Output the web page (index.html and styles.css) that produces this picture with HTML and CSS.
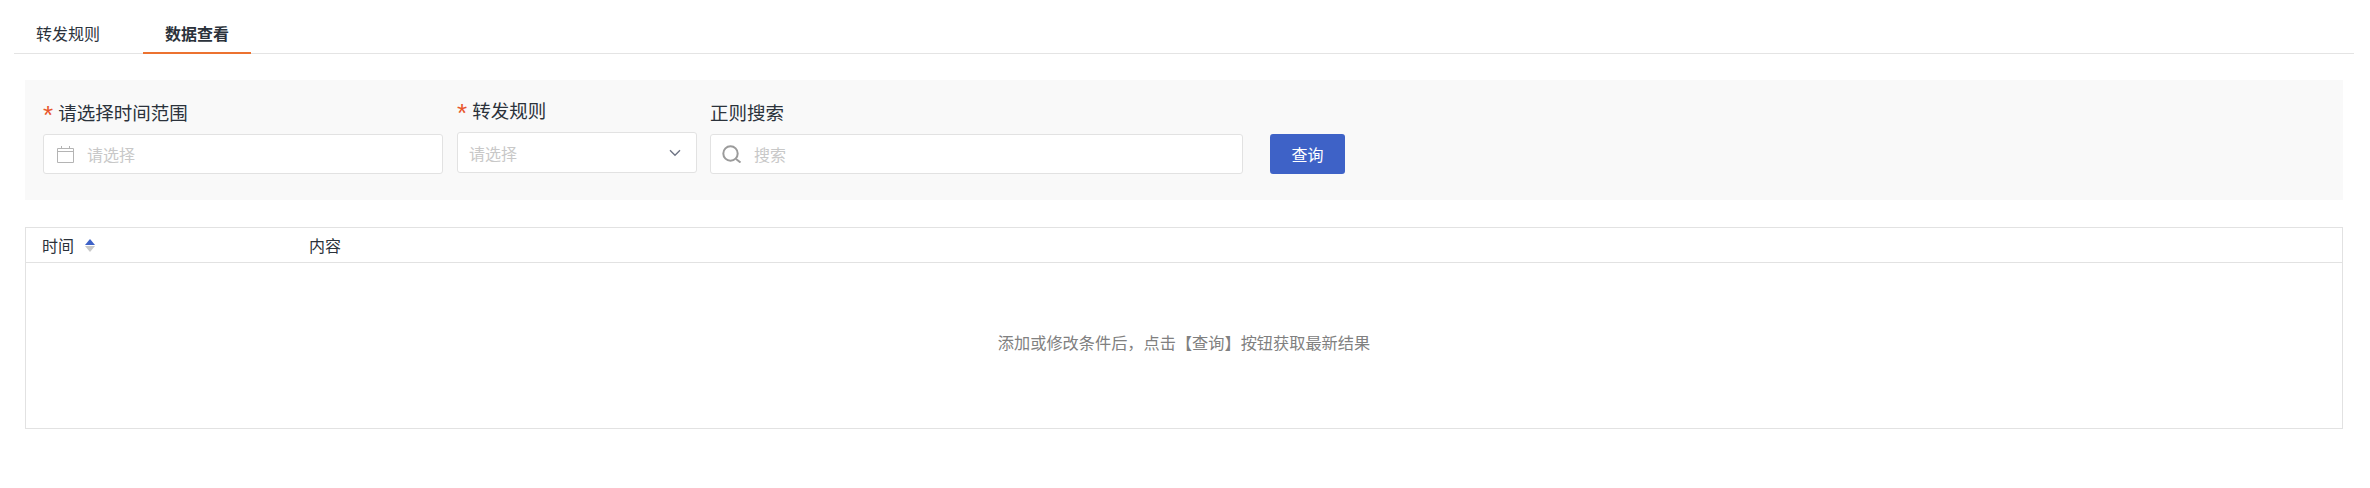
FILE: index.html
```html
<!DOCTYPE html>
<html>
<head>
    <meta charset="utf-8">
    <title>数据查看</title>
    <link rel="stylesheet" href="styles.css">
</head>
<body>
    <div class="tabs">
        <div class="tab">转发规则</div>
        <div class="tab active">数据查看</div>
    </div>

    <div class="filters">
        <div class="field field-time">
            <div class="label"><span class="required">*</span>请选择时间范围</div>
            <div class="input">
                <svg class="icon-calendar" width="17" height="17" viewBox="0 0 17 17" fill="none" stroke="#b4b4b4" stroke-width="1">
                    <path d="M.5 2.5h16v14H.5zM.5 5.5h16M4.5 0v3M12.5 0v3"/>
                </svg>
                <span class="placeholder">请选择</span>
            </div>
        </div>
        <div class="field field-rule">
            <div class="label"><span class="required">*</span>转发规则</div>
            <div class="input select">
                <span class="placeholder">请选择</span>
                <svg width="12" height="8" viewBox="0 0 12 8" fill="none" stroke="#6f7585" stroke-width="1.4">
                    <path d="M1 1.2l5 5 5-5"/>
                </svg>
            </div>
        </div>
        <div class="field field-search">
            <div class="label">正则搜索</div>
            <div class="input">
                <svg class="icon-search" width="20" height="18" viewBox="0 0 20 18" fill="none" stroke="#9b9b9b" stroke-width="2">
                    <circle cx="8.5" cy="8.5" r="7.2"/>
                    <path d="M14 14l4.5 3.5"/>
                </svg>
                <span class="placeholder">搜索</span>
            </div>
        </div>
        <button class="query-btn">查询</button>
    </div>

    <div class="table">
        <div class="table-head">
            <div class="col-time">
                时间
                <span class="sort">
                    <span class="sort-up"></span>
                    <span class="sort-down"></span>
                </span>
            </div>
            <div class="col-content">内容</div>
        </div>
        <div class="table-empty">添加或修改条件后，点击【查询】按钮获取最新结果</div>
    </div>
</body>
</html>
```

FILE: styles.css
```css
body {
    margin: 0;
    height: 488px;
    overflow: hidden;
    background: #fff;
    color: #2b323b;
    font-family: "Noto Sans CJK SC", "Noto Sans", sans-serif;
}

.tabs {
    display: flex;
    gap: 21px;
    width: 2340px;
    height: 53px;
    margin-left: 14px;
    border-bottom: 1px solid #e4e4e4;
}
.tab {
    width: 108px;
    height: 54px;
    box-sizing: border-box;
    padding-top: 21px;
    font-size: 16px;
    line-height: 24px;
    text-align: center;
}
.tab.active {
    font-weight: 700;
    border-bottom: 2px solid #ec7230;
}

.filters {
    display: flex;
    align-items: flex-end;
    width: 2318px;
    height: 120px;
    box-sizing: border-box;
    margin: 26px 0 0 25px;
    padding: 0 0 26px 18px;
    background: #f9f9f9;
}
.field {
    display: flex;
    flex-direction: column;
}
.field-time {
    width: 400px;
    margin-right: 14px;
}
.field-rule {
    width: 240px;
    margin-right: 13px;
    margin-bottom: 1px;
}
.field-search {
    width: 533px;
    margin-right: 27px;
}
.label {
    height: 26px;
    margin-bottom: 9px;
    font-size: 18.5px;
    line-height: 26px;
    white-space: nowrap;
}
.required {
    margin-right: 5px;
    color: #e8562c;
    font-family: "Liberation Sans", sans-serif;
    font-size: 26px;
    line-height: 0;
    vertical-align: -4px;
}
.input {
    display: flex;
    align-items: center;
    height: 40px;
    box-sizing: border-box;
    padding: 0 13px;
    background: #fff;
    border: 1px solid #e2e2e2;
    border-radius: 3px;
}
.select {
    justify-content: space-between;
    height: 41px;
    padding: 0 15px 0 11px;
}
.placeholder {
    font-size: 16px;
    color: #c8c8c8;
}
.icon-calendar {
    margin-right: 13px;
}
.icon-search {
    margin-left: -2px;
    margin-right: 12px;
}

.query-btn {
    width: 75px;
    height: 40px;
    padding: 0;
    color: #fff;
    font-family: inherit;
    font-size: 16px;
    background-color: #3e62c7;
    border: none;
    border-radius: 3px;
}

.table {
    width: 2318px;
    height: 202px;
    box-sizing: border-box;
    margin: 27px 0 0 25px;
    border: 1px solid #e2e2e2;
}
.table-head {
    display: flex;
    align-items: center;
    height: 35px;
    box-sizing: border-box;
    padding-bottom: 1px;
    border-bottom: 1px solid #e2e2e2;
    font-size: 16px;
}
.col-time {
    display: flex;
    align-items: center;
    width: 267px;
    padding-left: 16px;
    box-sizing: border-box;
}
.sort {
    display: flex;
    flex-direction: column;
    gap: 1px;
    margin-top: 2px;
    margin-left: 11px;
}
.sort-up, .sort-down {
    width: 0;
    height: 0;
    border-left: 5.5px solid transparent;
    border-right: 5.5px solid transparent;
}
.sort-up {
    border-bottom: 6px solid #3e62c7;
}
.sort-down {
    border-top: 6px solid #c8c8c8;
}
.col-content {
    padding-left: 16px;
}
.table-empty {
    display: flex;
    justify-content: center;
    align-items: center;
    height: 157px;
    font-size: 16.2px;
    color: #808080;
}
```
